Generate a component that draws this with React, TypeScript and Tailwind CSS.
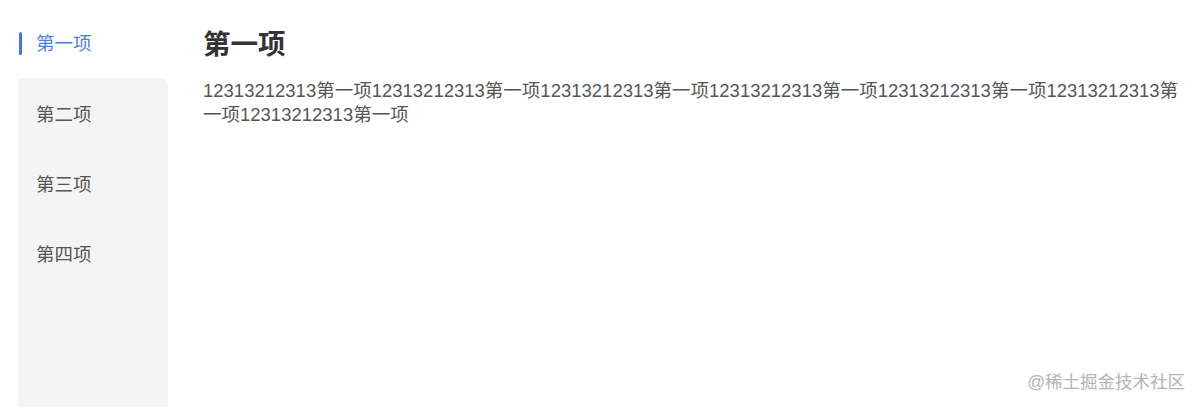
import React from "react";

const items = ["第一项", "第二项", "第三项", "第四项"];
const unit = "12313212313第一项";

export default function App() {
  const body = Array.from({ length: 7 }, () => unit).join("");
  return (
    <div
      className="relative flex h-[407px] w-[1200px] overflow-hidden bg-white pl-[18px]"
      style={{ fontFamily: '"Liberation Sans", "Noto Sans CJK SC", sans-serif' }}
    >
      {/* ---------- Sidebar ---------- */}
      <div className="flex w-[150px] shrink-0 flex-col pt-[10px]">
        <div className="relative flex h-[68px] items-center pl-[18px] text-[18.5px] text-[#4b7fe0]">
          <span className="absolute left-[1px] top-[22px] h-[23px] w-[3px] rounded-sm bg-[#3f78e0]" />
          {items[0]}
        </div>
        <div className="flex flex-1 flex-col rounded-tr-lg bg-[#f4f4f4] pt-[2px]">
          {items.slice(1).map((t) => (
            <div key={t} className="flex h-[70px] items-center pl-[18px] text-[18.5px] text-[#555]">
              {t}
            </div>
          ))}
        </div>
      </div>

      {/* ---------- Content ---------- */}
      <div className="flex-1 pl-[35px] pr-[12px] pt-[27px]">
        <h1 className="text-[27.5px] font-bold leading-[36px] text-[#333]">第一项</h1>
        <p className="mt-[16px] break-all text-[18.5px] leading-[24px] text-[#555]">{body}</p>
      </div>

      <div className="absolute bottom-[14px] right-[15px] text-[17.5px] leading-[22px] text-[#b4b4b4]">
        @稀土掘金技术社区
      </div>
    </div>
  );
}
